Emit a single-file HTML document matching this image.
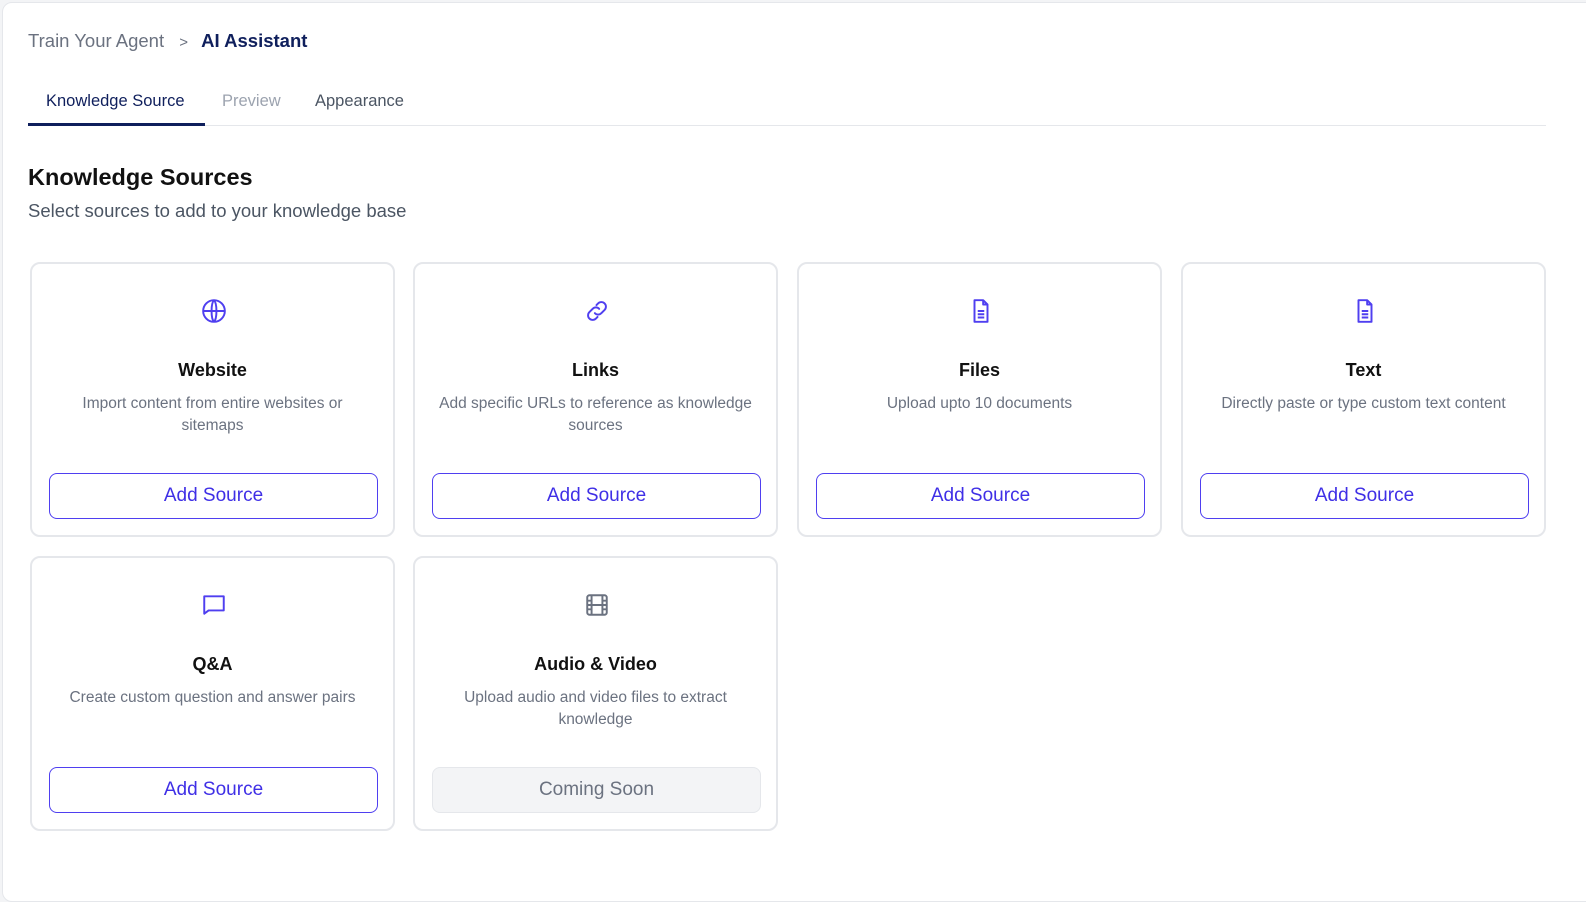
<!DOCTYPE html>
<html><head><style>
*{box-sizing:border-box;margin:0;padding:0}
body{width:1586px;height:853px;background:#f3f4f6;font-family:"Liberation Sans",sans-serif;position:relative;overflow:hidden}
.page{position:absolute;left:2px;top:2px;width:1600px;height:900px;background:#fff;border:1px solid #e5e7eb;border-radius:10px}
.abs{position:absolute;white-space:nowrap}
.card{position:absolute;width:365px;height:275px;border:2px solid #e5e7eb;border-radius:10px;background:#fff;text-align:center}
.card svg{position:absolute;left:169px;top:34px}
.card h3{position:absolute;top:96px;left:0;right:0;font-size:18px;font-weight:bold;color:#111}
.card p{position:absolute;top:129px;left:20px;right:20px;font-size:15.5px;line-height:22px;color:#6b7280}
.btn{position:absolute;left:17px;top:209px;width:329px;height:46px;border:1.5px solid #4f3ff0;border-radius:8px;color:#3f2fe6;font-size:19px;line-height:43px}
.soon{border:1px solid #e5e7eb;background:#f3f4f6;color:#6b7280}
</style></head><body>
<div class="page"></div>
<div class="abs" style="left:28px;top:30px;font-size:18.5px;color:#6b7280">Train Your Agent <span style="margin:0 8px 0 10px;font-size:15px">&gt;</span> <span style="color:#0f1f5c;font-weight:bold">AI Assistant</span></div>
<div class="abs" style="left:46px;top:92px;font-size:16.5px;color:#0f1f5c">Knowledge Source</div>
<div class="abs" style="left:222px;top:92px;font-size:16.5px;color:#9ca3af">Preview</div>
<div class="abs" style="left:315px;top:92px;font-size:16.5px;color:#4b5563">Appearance</div>
<div class="abs" style="left:28px;top:125px;width:1518px;height:1px;background:#e5e7eb"></div>
<div class="abs" style="left:28px;top:123px;width:177px;height:3px;background:#0f1f5c"></div>
<div class="abs" style="left:28px;top:164px;font-size:23.5px;font-weight:bold;color:#111">Knowledge Sources</div>
<div class="abs" style="left:28px;top:200px;font-size:18.5px;color:#4b5563">Select sources to add to your knowledge base</div>

<div class="card" style="left:30px;top:262px"><svg width="26" height="26" viewBox="0 0 24 24" fill="none" stroke="#4f3ff0" stroke-width="1.8"><circle cx="12" cy="12" r="10"/><path d="M2 12h20M12 2c3 3 3 17 0 20M12 2c-3 3-3 17 0 20"/></svg><h3>Website</h3><p>Import content from entire websites or sitemaps</p><div class="btn">Add Source</div></div>
<div class="card" style="left:413px;top:262px"><svg width="26" height="26" viewBox="0 0 24 24" fill="none" stroke="#4f3ff0" stroke-width="1.8" stroke-linecap="round"><path d="M10 14a4 4 0 0 0 6 0l3-3a4 4 0 0 0-6-6l-1.5 1.5"/><path d="M14 10a4 4 0 0 0-6 0l-3 3a4 4 0 0 0 6 6l1.5-1.5"/></svg><h3>Links</h3><p>Add specific URLs to reference as knowledge sources</p><div class="btn">Add Source</div></div>
<div class="card" style="left:797px;top:262px"><svg width="26" height="26" viewBox="0 0 24 24" fill="none" stroke="#4f3ff0" stroke-width="1.8" stroke-linejoin="round"><path d="M14 2H6v20h12V6z"/><path d="M14 2v4h4M9 12h6M9 15h6M9 18h6"/></svg><h3>Files</h3><p>Upload upto 10 documents</p><div class="btn">Add Source</div></div>
<div class="card" style="left:1181px;top:262px"><svg width="26" height="26" viewBox="0 0 24 24" fill="none" stroke="#4f3ff0" stroke-width="1.8" stroke-linejoin="round"><path d="M14 2H6v20h12V6z"/><path d="M14 2v4h4M9 12h6M9 15h6M9 18h6"/></svg><h3>Text</h3><p>Directly paste or type custom text content</p><div class="btn">Add Source</div></div>
<div class="card" style="left:30px;top:556px"><svg width="26" height="26" viewBox="0 0 24 24" fill="none" stroke="#4f3ff0" stroke-width="1.8" stroke-linejoin="round"><path d="M3 4h18v13H7l-4 3z"/></svg><h3>Q&amp;A</h3><p>Create custom question and answer pairs</p><div class="btn">Add Source</div></div>
<div class="card" style="left:413px;top:556px"><svg width="26" height="26" viewBox="0 0 24 24" fill="none" stroke="#6b7280" stroke-width="1.8"><rect x="3" y="3" width="18" height="18" rx="2"/><path d="M7 3v18M17 3v18M3 8h4M3 12h18M3 16h4M17 8h4M17 16h4"/></svg><h3>Audio &amp; Video</h3><p>Upload audio and video files to extract knowledge</p><div class="btn soon">Coming Soon</div></div>
</body></html>
